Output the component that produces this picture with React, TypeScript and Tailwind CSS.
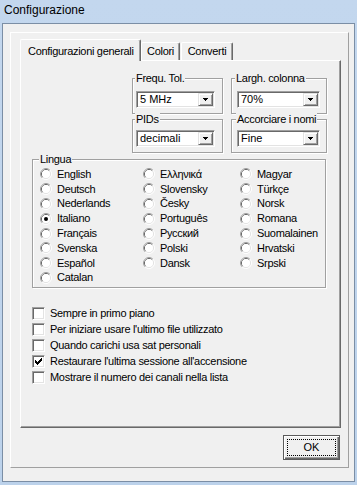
import React from "react";

const F = "font-['Liberation_Sans',Arial,sans-serif] text-[11px] tracking-[-0.3px] text-black leading-[13px]";

function Radio({ checked = false }: { checked?: boolean }) {
  return (
    <svg width="12" height="12" viewBox="0 0 12 12" className="shrink-0">
      <path d="M2.11 9.89A5.5 5.5 0 0 1 9.89 2.11" fill="none" stroke="#a0a0a0" />
      <path d="M9.89 2.11A5.5 5.5 0 0 1 2.11 9.89" fill="none" stroke="#ffffff" />
      <path d="M2.82 9.18A4.5 4.5 0 0 1 9.18 2.82" fill="none" stroke="#696969" />
      <path d="M9.18 2.82A4.5 4.5 0 0 1 2.82 9.18" fill="none" stroke="#e3e3e3" />
      <circle cx="6" cy="6" r="4" fill="#ffffff" />
      {checked && <circle cx="6" cy="6" r="2" fill="#000000" />}
    </svg>
  );
}

function Check({ checked = false }: { checked?: boolean }) {
  return (
    <div className="w-[13px] h-[13px] shrink-0 bg-white border border-t-[#a0a0a0] border-l-[#a0a0a0] border-r-white border-b-white shadow-[inset_1px_1px_0_#696969,inset_-1px_-1px_0_#e3e3e3] flex items-center justify-center">
      {checked && (
        <svg width="7" height="7" viewBox="0 0 7 7" shapeRendering="crispEdges">
          <rect x="6" y="0" width="1" height="1" fill="#000" />
          <rect x="5" y="1" width="2" height="1" fill="#000" />
          <rect x="0" y="2" width="1" height="1" fill="#000" />
          <rect x="4" y="2" width="3" height="1" fill="#000" />
          <rect x="0" y="3" width="2" height="1" fill="#000" />
          <rect x="3" y="3" width="3" height="1" fill="#000" />
          <rect x="0" y="4" width="5" height="1" fill="#000" />
          <rect x="1" y="5" width="3" height="1" fill="#000" />
          <rect x="2" y="6" width="1" height="1" fill="#000" />
        </svg>
      )}
    </div>
  );
}

function Combo({ value, className }: { value: string; className: string }) {
  return (
    <div
      className={
        "h-[17px] bg-white border border-t-[#a0a0a0] border-l-[#a0a0a0] border-r-white border-b-white shadow-[inset_1px_1px_0_#696969,inset_-1px_-1px_0_#e3e3e3] flex items-center justify-between pl-[2px] pr-[1px] tracking-normal " +
        className
      }
    >
      <span className="pl-[1px]">{value}</span>
      <div className="w-[15px] h-[13px] bg-[#f0f0f0] border border-t-[#e3e3e3] border-l-[#e3e3e3] border-r-[#696969] border-b-[#696969] shadow-[inset_1px_1px_0_#fff,inset_-1px_-1px_0_#a0a0a0] flex items-center justify-center">
        <svg width="5" height="3" viewBox="0 0 5 3" shapeRendering="crispEdges">
          <rect x="0" y="0" width="5" height="1" fill="#000" />
          <rect x="1" y="1" width="3" height="1" fill="#000" />
          <rect x="2" y="2" width="1" height="1" fill="#000" />
        </svg>
      </div>
    </div>
  );
}

function Group({
  label,
  labelLeft,
  className,
  children,
}: {
  label: string;
  labelLeft: string;
  className: string;
  children: React.ReactNode;
}) {
  return (
    <div className={"relative border border-[#a0a0a0] shadow-[inset_1px_1px_0_#fff,1px_1px_0_#fff] " + className}>
      <span className={"absolute top-[-7px] bg-[#f0f0f0] px-[1px] " + labelLeft}>{label}</span>
      {children}
    </div>
  );
}

function RadioItem({ label, checked = false }: { label: string; checked?: boolean }) {
  return (
    <div className="h-[14.8px] flex items-center gap-[5px]">
      <Radio checked={checked} />
      <span>{label}</span>
    </div>
  );
}

function CheckItem({ label, checked = false }: { label: string; checked?: boolean }) {
  return (
    <div className="h-[16px] flex items-center gap-[5px]">
      <Check checked={checked} />
      <span>{label}</span>
    </div>
  );
}

export default function App() {
  return (
    <div className="w-[357px] h-[485px] bg-gradient-to-b from-[#c3d7ee] to-[#bcd2eb] overflow-hidden">
      <div className="h-[23px] pl-[4px] pt-[3px] font-['Liberation_Sans',Arial,sans-serif] text-[12px] leading-[14px] text-black">
        Configurazione
      </div>
      <div className={"ml-[2px] w-[353px] h-[459px] border border-[#7b8ea5] bg-[#f0f0f0] " + F}>
        <div className="ml-[7px] mt-[8px] w-[339px] h-[436px] border-t border-l border-t-white border-l-white border-r border-b border-r-[#a0a0a0] border-b-[#a0a0a0]">
          {/* tabs */}
          <div className="ml-[9px] mt-[6px] h-[21px] flex items-end">
            <div className="relative z-10 mb-[-1px] w-[121px] h-[22px] bg-[#f0f0f0] border-t border-l border-t-white border-l-white border-r border-r-[#696969] shadow-[inset_-1px_0_0_#a0a0a0] rounded-t-[2px] pl-[7px] pt-[2px] flex items-center">
              Configurazioni generali
            </div>
            <div className="w-[39px] h-[18px] bg-[#f0f0f0] border-t border-l border-t-white border-l-white border-r border-r-[#696969] shadow-[inset_-1px_0_0_#a0a0a0] rounded-t-[2px] flex items-center justify-center">
              Colori
            </div>
            <div className="ml-[1px] w-[52px] h-[18px] bg-[#f0f0f0] border-t border-l border-t-white border-l-white border-r border-r-[#696969] shadow-[inset_-1px_0_0_#a0a0a0] rounded-t-[2px] flex items-center justify-center">
              Converti
            </div>
          </div>
          {/* panel */}
          <div className="ml-[9px] w-[321px] h-[368px] border-t border-l border-t-white border-l-white border-r border-b border-r-[#696969] border-b-[#696969] shadow-[inset_-1px_-1px_0_#a0a0a0] pl-[11px] flex flex-col">
            <div className="ml-[100px] mt-[17px] flex gap-[8px]">
              <Group label="Frequ. Tol." labelLeft="left-[2px]" className="w-[91px] h-[36px] pt-[12px] pl-[3px]">
                <Combo value="5 MHz" className="w-[79px]" />
              </Group>
              <Group label="Largh. colonna" labelLeft="left-[3px]" className="w-[96px] h-[36px] pt-[12px] pl-[5px]">
                <Combo value="70%" className="w-[83px]" />
              </Group>
            </div>
            <div className="ml-[100px] mt-[5px] flex gap-[8px]">
              <Group label="PIDs" labelLeft="left-[2px]" className="w-[91px] h-[34px] pt-[10px] pl-[3px]">
                <Combo value="decimali" className="w-[79px]" />
              </Group>
              <Group label="Accorciare i nomi" labelLeft="left-[4px]" className="w-[96px] h-[34px] pt-[10px] pl-[5px]">
                <Combo value="Fine" className="w-[83px]" />
              </Group>
            </div>
            <Group label="Lingua" labelLeft="left-[6px]" className="mt-[6px] w-[294px] h-[129px] pt-[7px] pl-[7px]">
              <div className="grid grid-cols-[103px_97px_1fr]">
                <div className="flex flex-col">
                  <RadioItem label="English" />
                  <RadioItem label="Deutsch" />
                  <RadioItem label="Nederlands" />
                  <RadioItem label="Italiano" checked />
                  <RadioItem label="Français" />
                  <RadioItem label="Svenska" />
                  <RadioItem label="Español" />
                  <RadioItem label="Catalan" />
                </div>
                <div className="flex flex-col">
                  <RadioItem label="Ελληνικά" />
                  <RadioItem label="Slovensky" />
                  <RadioItem label="Česky" />
                  <RadioItem label="Português" />
                  <RadioItem label="Русский" />
                  <RadioItem label="Polski" />
                  <RadioItem label="Dansk" />
                </div>
                <div className="flex flex-col">
                  <RadioItem label="Magyar" />
                  <RadioItem label="Türkçe" />
                  <RadioItem label="Norsk" />
                  <RadioItem label="Romana" />
                  <RadioItem label="Suomalainen" />
                  <RadioItem label="Hrvatski" />
                  <RadioItem label="Srpski" />
                </div>
              </div>
            </Group>
            <div className="mt-[17px] flex flex-col">
              <CheckItem label="Sempre in primo piano" />
              <CheckItem label="Per iniziare usare l'ultimo file utilizzato" />
              <CheckItem label="Quando carichi usa sat personali" />
              <CheckItem label="Restaurare l'ultima sessione all'accensione" checked />
              <CheckItem label="Mostrare il numero dei canali nella lista" />
            </div>
          </div>
          {/* button row */}
          <div className="ml-[9px] w-[321px] mt-[7px] flex justify-end pr-[1px]">
            <div className="w-[57px] h-[25px] border border-[#5a5a5a] bg-[#f0f0f0] shadow-[inset_1px_1px_0_#fff,inset_-1px_-1px_0_#696969,inset_-2px_-2px_0_#a0a0a0] p-[3px] flex">
              <div className="flex-1 border border-dotted border-black flex items-center justify-center tracking-normal">
                OK
              </div>
            </div>
          </div>
        </div>
      </div>
    </div>
  );
}
